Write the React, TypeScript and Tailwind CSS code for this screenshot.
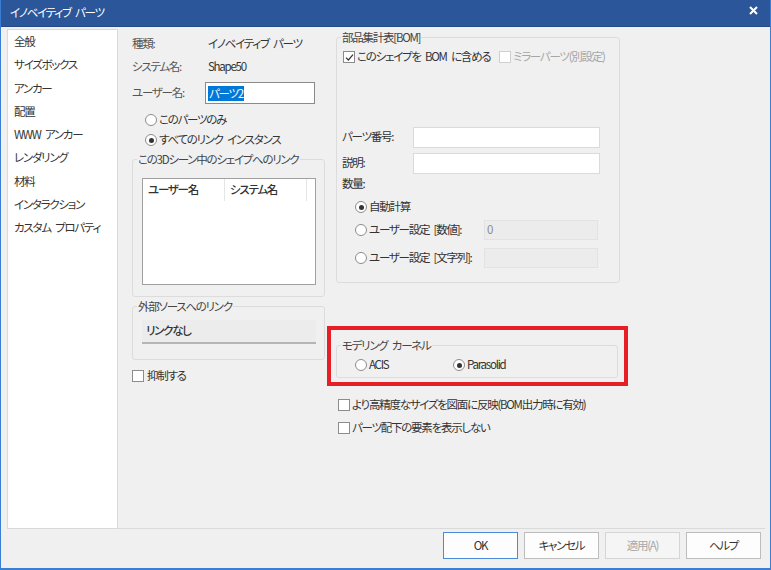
import React from 'react';

const font = "font-['Noto_Sans_CJK_JP',sans-serif] [font-feature-settings:'palt'] [word-spacing:3px] whitespace-nowrap";

function Radio({ checked }: { checked?: boolean }) {
  return (
    <span className="w-[12px] h-[12px] rounded-full border border-[#8c8c8c] bg-white flex items-center justify-center shrink-0">
      {checked && <span className="w-[5px] h-[5px] rounded-full bg-[#333]" />}
    </span>
  );
}

function Check({ checked, disabled }: { checked?: boolean; disabled?: boolean }) {
  return (
    <span
      className={
        disabled
          ? 'w-[12px] h-[12px] border border-[#cfcfcf] bg-white flex items-center justify-center shrink-0'
          : 'w-[12px] h-[12px] border border-[#8c8c8c] bg-white flex items-center justify-center shrink-0'
      }
    >
      {checked && (
        <svg width="9" height="9" viewBox="0 0 9 9">
          <path d="M1 4.6 L3.4 7 L8 1.6" stroke="#333" strokeWidth="1.2" fill="none" />
        </svg>
      )}
    </span>
  );
}

function Group({ title, className, children }: { title: string; className: string; children?: React.ReactNode }) {
  return (
    <fieldset className={`border border-[#dcdcdc] rounded-[3px] ${className}`}>
      <legend className="ml-[4px] px-[1px] leading-[14px] text-[#444]">{title}</legend>
      {children}
    </fieldset>
  );
}

const menu = ['全般', 'サイズボックス', 'アンカー', '配置', 'WWW アンカー', 'レンダリング', '材料', 'インタラクション', 'カスタム プロパティ'];

export default function App() {
  return (
    <div className={`w-[771px] h-[570px] flex flex-col bg-[#2b579a] border-l border-r border-b-2 border-[#3a7fd5] text-[11.5px] tracking-[-1.25px] text-[#333] ${font}`}>
      {/* title bar */}
      <div className="h-[27px] shrink-0 flex items-center justify-between pl-[9px] pr-[12px] border-b border-[#244b85]">
        <span className="text-white leading-none">イノベイティブ パーツ</span>
        <svg width="9" height="9" viewBox="0 0 9 9" className="-mt-[6px]">
          <path d="M1 1 L8 8 M8 1 L1 8" stroke="white" strokeWidth="2" />
        </svg>
      </div>

      <div className="flex-1 bg-[#f0f0f0] flex flex-col">
        <div className="mt-[2px] h-[500px] flex pr-[5px]">
          {/* left list */}
          <div className="ml-[6px] w-[111px] h-full bg-white border border-[#d9d9d9] pl-[6px]">
            {menu.map((m) => (
              <div key={m} className="h-[23.25px] flex items-center">
                {m}
              </div>
            ))}
          </div>

          {/* main panel */}
          <div className="flex-1 flex border-b border-[#dadada]">
            {/* middle column */}
            <div className="w-[209px] pl-[14px] pt-[4px] flex flex-col">
              <div className="h-[22px] flex items-center">
                <span className="w-[76px] text-[#555]">種類:</span>
                <span>イノベイティブ パーツ</span>
              </div>
              <div className="h-[24px] flex items-center">
                <span className="w-[76px] text-[#555]">システム名:</span>
                <span>Shape50</span>
              </div>
              <div className="h-[28px] flex items-center">
                <span className="w-[73px] text-[#555]">ユーザー名:</span>
                <div className="w-[110px] h-[22px] bg-white border border-[#8a8a8a] flex items-center pl-[2px]">
                  <span className="bg-[#0078d7] text-white px-[1px] leading-[15px]">パーツ2</span>
                </div>
              </div>
              <div className="mt-[3px] h-[20px] flex items-center gap-[2px] pl-[13px]">
                <Radio />
                <span>このパーツのみ</span>
              </div>
              <div className="h-[20px] flex items-center gap-[2px] pl-[13px]">
                <Radio checked />
                <span>すべてのリンク インスタンス</span>
              </div>

              <Group title="この3Dシーン中のシェイプへのリンク" className="mt-[2px] w-[193px] h-[145px]">
                <div className="mt-[12px] ml-[9px] w-[174px] h-[107px] bg-white border border-[#a0a0a0]">
                  <div className="h-[22px] flex items-center font-medium">
                    <span className="w-[82px] pl-[5px] h-full flex items-center border-r border-[#e5e5e5]">ユーザー名</span>
                    <span className="w-[82px] pl-[5px] h-full flex items-center border-r border-[#e5e5e5]">システム名</span>
                  </div>
                </div>
              </Group>

              <Group title="外部ソースへのリンク" className="mt-[2px] w-[193px] h-[61px]">
                <div className="mt-[7px] ml-[9px] w-[174px] h-[24px] bg-[#ececec] border-b-2 border-[#b5b5b5] flex items-center pl-[4px] font-medium">
                  リンクなし
                </div>
              </Group>

              <div className="mt-[6px] h-[20px] flex items-center gap-[3px]">
                <Check />
                <span>抑制する</span>
              </div>
            </div>

            {/* right column */}
            <div className="w-[301px] flex flex-col">
              <Group title="部品集計表[BOM]" className="mt-[1px] ml-[9px] w-[284px] h-[253px]">
                <div className="mt-[3px] h-[20px] flex items-center pl-[6px]">
                  <div className="w-[156px] flex items-center gap-[2px]">
                    <Check checked />
                    <span>このシェイプを BOM に含める</span>
                  </div>
                  <div className="flex items-center gap-[2px] text-[#a6a6a6]">
                    <Check disabled />
                    <span>ミラーパーツ(別設定)</span>
                  </div>
                </div>
                <div className="mt-[59px] h-[22px] flex items-center pl-[5px]">
                  <span className="w-[71px]">パーツ番号:</span>
                  <div className="w-[187px] h-[21px] bg-white border border-[#dadada]" />
                </div>
                <div className="mt-[4px] h-[22px] flex items-center pl-[5px]">
                  <span className="w-[71px]">説明:</span>
                  <div className="w-[187px] h-[21px] bg-white border border-[#dadada]" />
                </div>
                <div className="h-[20px] flex items-center pl-[5px]">数量:</div>
                <div className="mt-[3px] h-[20px] flex items-center pl-[18px] gap-[2px]">
                  <Radio checked />
                  <span>自動計算</span>
                </div>
                <div className="mt-[3px] h-[20px] flex items-center pl-[18px]">
                  <div className="w-[129px] flex items-center gap-[2px]">
                    <Radio />
                    <span>ユーザー設定 [数値]:</span>
                  </div>
                  <div className="w-[114px] h-[20px] bg-[#ececec] border border-[#e2e2e2] pl-[2px] flex items-center text-[#8a8a8a]">0</div>
                </div>
                <div className="mt-[8px] h-[20px] flex items-center pl-[18px]">
                  <div className="w-[129px] flex items-center gap-[2px]">
                    <Radio />
                    <span>ユーザー設定 [文字列]:</span>
                  </div>
                  <div className="w-[114px] h-[20px] bg-[#ececec] border border-[#e2e2e2]" />
                </div>
              </Group>

              <div className="mt-[43px] w-[301px] h-[60px] border-4 border-[#e61f26] pt-[8px]">
                <Group title="モデリング カーネル" className="ml-[5px] w-[282px] h-[40px]">
                  <div className="mt-[3px] h-[20px] flex items-center pl-[18px]">
                    <div className="w-[98px] flex items-center gap-[2px]">
                      <Radio />
                      <span>ACIS</span>
                    </div>
                    <div className="flex items-center gap-[2px]">
                      <Radio checked />
                      <span>Parasolid</span>
                    </div>
                  </div>
                </Group>
              </div>

              <div className="mt-[9px] h-[20px] flex items-center gap-[2px] pl-[11px]">
                <Check />
                <span>より高精度なサイズを図面に反映(BOM出力時に有効)</span>
              </div>
              <div className="mt-[3px] h-[20px] flex items-center gap-[2px] pl-[11px]">
                <Check />
                <span>パーツ配下の要素を表示しない</span>
              </div>
            </div>
          </div>
        </div>

        {/* buttons */}
        <div className="pt-[3px] flex justify-end gap-[6px] pr-[9px]">
          <button className="w-[75px] h-[27px] bg-[#fdfdfd] border border-[#4a8ad8]">OK</button>
          <button className="w-[75px] h-[27px] bg-[#fdfdfd] border border-[#bdbdbd]">キャンセル</button>
          <button className="w-[75px] h-[27px] bg-[#f5f5f5] border border-[#d5d5d5] text-[#a8a8a8]">適用(A)</button>
          <button className="w-[75px] h-[27px] bg-[#fdfdfd] border border-[#bdbdbd]">ヘルプ</button>
        </div>
      </div>
    </div>
  );
}
